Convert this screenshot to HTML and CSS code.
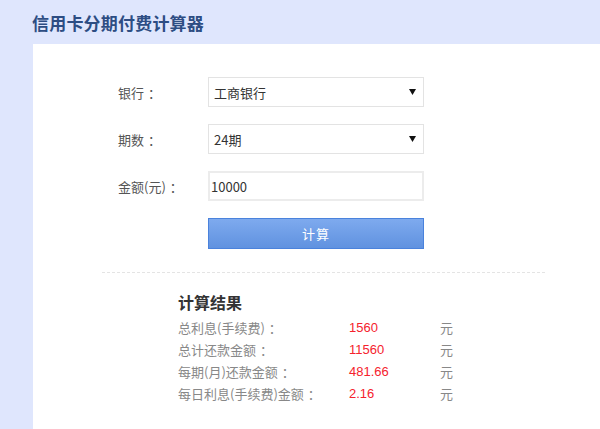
FILE: index.html
```html
<!DOCTYPE html>
<html lang="zh-CN">
<head>
<meta charset="utf-8">
<title>信用卡分期付费计算器</title>
<link rel="stylesheet" href="styles.css">
</head>
<body>
<header class="top">
  <h1 class="title">信用卡分期付费计算器</h1>
</header>
<main class="panel">
  <form class="form">
    <div class="row">
      <label class="label">银行<span class="colon">：</span></label>
      <div class="field select"><span>工商银行</span><svg class="arrow" width="7" height="6" viewBox="0 0 7 6"><path d="M0 0H7L3.5 6Z" fill="#111"/></svg></div>
    </div>
    <div class="row">
      <label class="label">期数<span class="colon">：</span></label>
      <div class="field select"><span>24期</span><svg class="arrow" width="7" height="6" viewBox="0 0 7 6"><path d="M0 0H7L3.5 6Z" fill="#111"/></svg></div>
    </div>
    <div class="row">
      <label class="label">金额(元)<span class="colon">：</span></label>
      <div class="field input"><span>10000</span></div>
    </div>
    <div class="row">
      <span class="label"></span>
      <div class="btn">计算</div>
    </div>
  </form>
  <hr class="divider">
  <section class="result">
    <h2 class="result-title">计算结果</h2>
    <div class="res-row"><span class="res-label">总利息(手续费)<span class="colon">：</span></span><span class="res-val">1560</span><span class="res-unit">元</span></div>
    <div class="res-row"><span class="res-label">总计还款金额<span class="colon">：</span></span><span class="res-val">11560</span><span class="res-unit">元</span></div>
    <div class="res-row"><span class="res-label">每期(月)还款金额<span class="colon">：</span></span><span class="res-val">481.66</span><span class="res-unit">元</span></div>
    <div class="res-row"><span class="res-label">每日利息(手续费)金额<span class="colon">：</span></span><span class="res-val">2.16</span><span class="res-unit">元</span></div>
  </section>
</main>
</body>
</html>
```
FILE: styles.css
```css
html, body {
  margin: 0;
  padding: 0;
}
body {
  background: #dfe6fd;
  font-family: "Noto Sans CJK SC", "Liberation Sans", sans-serif;
  height: 429px;
  overflow: hidden;
}
.top {
  height: 44px;
  display: flex;
  align-items: center;
  padding-left: 32px;
}
.title {
  margin: 0;
  font-size: 17px;
  font-weight: bold;
  color: #2d4d83;
  letter-spacing: 0.2px;
}
.panel {
  margin-left: 33px;
  background: #fff;
  height: 385px;
}
.form {
  padding-top: 33px;
  display: flex;
  flex-direction: column;
  gap: 17px;
}
.row {
  display: flex;
  align-items: center;
  height: 30px;
}
.label {
  width: 90px;
  padding-left: 85px;
  font-size: 13px;
  color: #555;
  flex: none;
}
.colon {
  padding-left: 4px;
}
.field {
  box-sizing: border-box;
  width: 216px;
  height: 30px;
  border: 1px solid #e3e3e3;
  display: flex;
  align-items: center;
  justify-content: space-between;
  font-size: 13px;
  color: #333;
}
.select {
  padding: 0 7px 0 5px;
}
.input {
  border-width: 2px;
  border-color: #ececec;
  padding-left: 1px;
}
.btn {
  box-sizing: border-box;
  width: 216px;
  height: 31px;
  border: 1px solid #4a82dc;
  background: linear-gradient(#7eaaee, #6092e0);
  color: #fff;
  font-size: 13px;
  display: flex;
  align-items: center;
  justify-content: center;
  letter-spacing: 1px;
}
.divider {
  margin: 24px 0 0 69px;
  width: 443px;
  border: none;
  border-top: 1px dashed #e4e4e4;
  height: 0;
}
.result {
  padding-left: 145px;
  padding-top: 18px;
}
.result-title {
  margin: 0 0 3px;
  font-size: 16px;
  font-weight: bold;
  color: #333;
  line-height: 22px;
}
.res-row {
  display: flex;
  height: 22px;
  align-items: center;
  font-size: 13px;
  color: #888;
}
.res-label {
  width: 171px;
}
.res-val {
  width: 91px;
  color: #f5222d;
  font-family: "Liberation Sans", sans-serif;
}
.res-unit {
  color: #888;
}
```
